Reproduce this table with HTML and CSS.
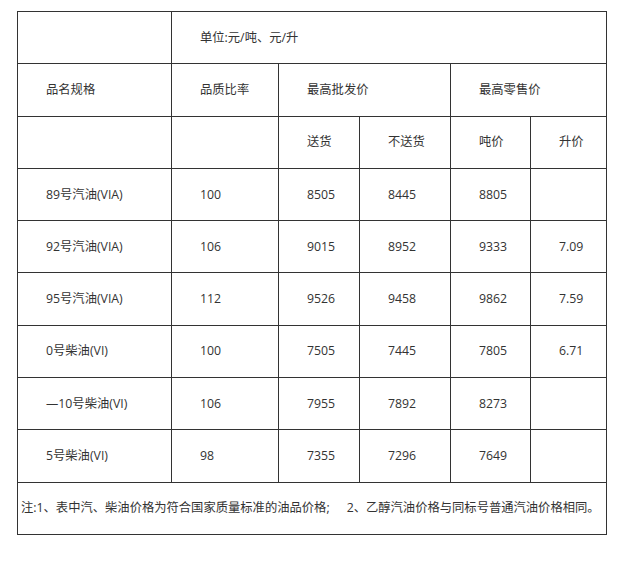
FILE: index.html
```html
<!DOCTYPE html>
<html lang="zh-CN">
<head>
<meta charset="utf-8">
<title>油价表</title>
<link rel="stylesheet" href="styles.css">
</head>
<body>
<div class="wrap">
<table class="price-table">
  <colgroup>
    <col class="c1"><col class="c2"><col class="c3"><col class="c4"><col class="c5"><col class="c6">
  </colgroup>
  <tr>
    <td></td>
    <td colspan="5">单位:元/吨、元/升</td>
  </tr>
  <tr>
    <td>品名规格</td>
    <td>品质比率</td>
    <td colspan="2">最高批发价</td>
    <td colspan="2">最高零售价</td>
  </tr>
  <tr>
    <td></td>
    <td></td>
    <td>送货</td>
    <td>不送货</td>
    <td>吨价</td>
    <td>升价</td>
  </tr>
  <tr>
    <td>89号汽油(VIA)</td><td>100</td><td>8505</td><td>8445</td><td>8805</td><td></td>
  </tr>
  <tr>
    <td>92号汽油(VIA)</td><td>106</td><td>9015</td><td>8952</td><td>9333</td><td>7.09</td>
  </tr>
  <tr>
    <td>95号汽油(VIA)</td><td>112</td><td>9526</td><td>9458</td><td>9862</td><td>7.59</td>
  </tr>
  <tr>
    <td>0号柴油(VI)</td><td>100</td><td>7505</td><td>7445</td><td>7805</td><td>6.71</td>
  </tr>
  <tr>
    <td>—10号柴油(VI)</td><td>106</td><td>7955</td><td>7892</td><td>8273</td><td></td>
  </tr>
  <tr>
    <td>5号柴油(VI)</td><td>98</td><td>7355</td><td>7296</td><td>7649</td><td></td>
  </tr>
  <tr>
    <td colspan="6" class="note">注:1、表中汽、柴油价格为符合国家质量标准的油品价格;<span class="note-2">2、乙醇汽油价格与同标号普通汽油价格相同。</span></td>
  </tr>
</table>
</div>
</body>
</html>
```

FILE: styles.css
```css
html, body {
  margin: 0;
  padding: 0;
  background: #ffffff;
}

.wrap {
  padding: 11px 0 0 17px;
}

.price-table {
  border-collapse: collapse;
  table-layout: fixed;
  width: 590px;
  font-family: "Open Sans", "Noto Sans CJK SC", sans-serif;
  font-size: 12.3px;
  color: #333333;
}

.c1 { width: 154px; }
.c2 { width: 107px; }
.c3 { width: 81px; }
.c4 { width: 91px; }
.c5 { width: 80px; }
.c6 { width: 76px; }

.price-table tr {
  height: 52.3px;
}

.price-table td {
  border: 1px solid #333333;
  padding: 0 0 0 28px;
  vertical-align: middle;
  text-align: left;
  white-space: nowrap;
  line-height: 18px;
}

.price-table td.note {
  padding-left: 3px;
}

.note-2 {
  margin-left: 17px;
}
```
